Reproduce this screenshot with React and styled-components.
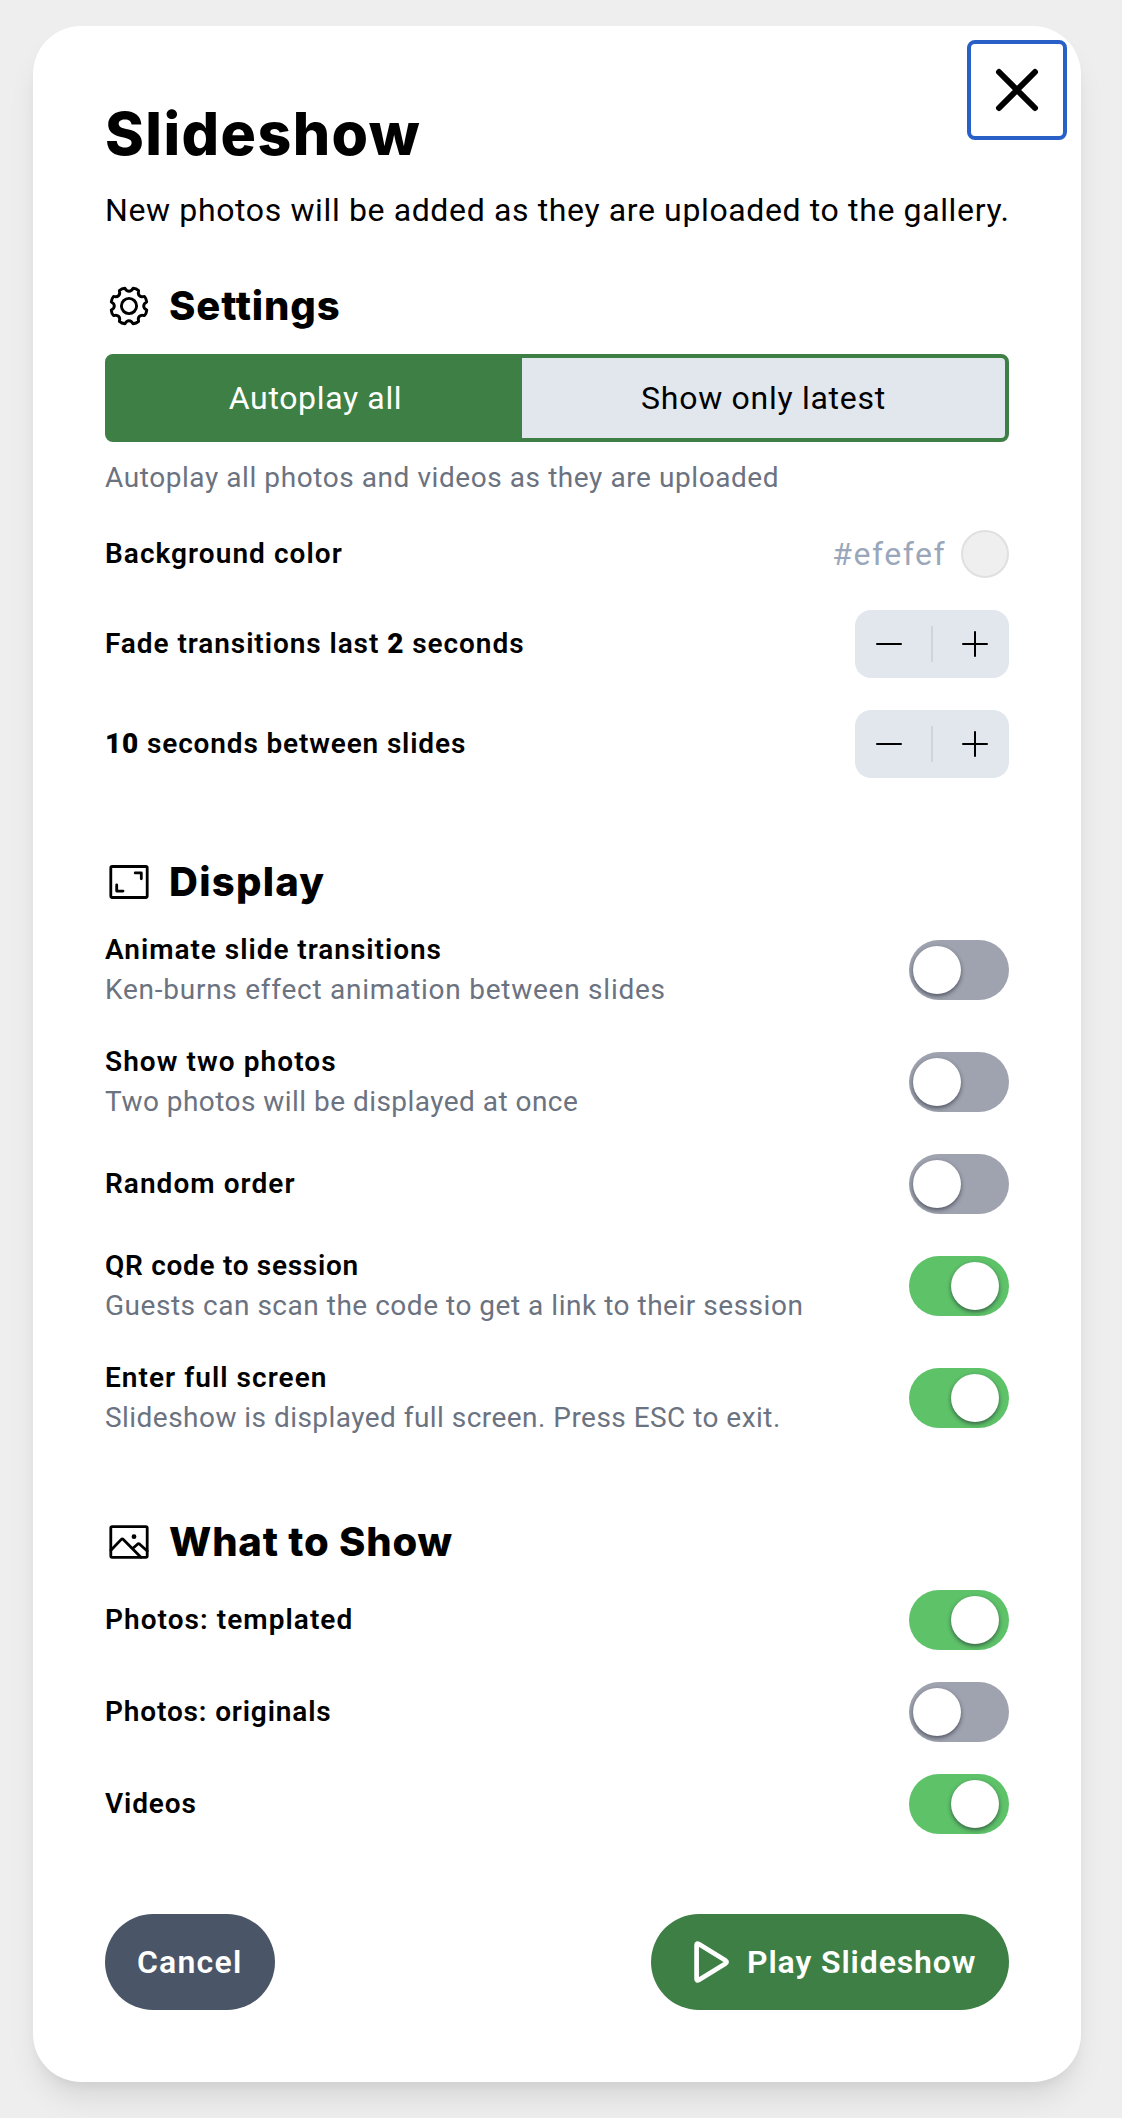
import React, { useState } from 'react';
import styled, { createGlobalStyle } from 'styled-components';

const GlobalStyle = createGlobalStyle`
  * {
    box-sizing: border-box;
  }
  body {
    margin: 0;
    background-color: #eeeeee;
    font-family: Roboto, 'Liberation Sans', sans-serif;
    color: #000;
  }
  button {
    font-family: inherit;
    color: inherit;
    border: none;
    background: none;
    padding: 0;
    margin: 0;
  }
`;
const Page = styled.div`
  padding: 26px 41px 36px 33px;
`;
const Card = styled.div`
  position: relative;
  height: 2056px;
  padding: 72px;
  border-radius: 48px;
  background-color: #fff;
  box-shadow: 0 20px 30px -6px rgba(0, 0, 0, 0.1), 0 8px 12px -4px rgba(0, 0, 0, 0.05);
`;
const CloseButton = styled.button`
  position: absolute;
  top: 14px;
  right: 14px;
  width: 100px;
  height: 100px;
  display: flex;
  align-items: center;
  justify-content: center;
  border: 4px solid #2860c8;
  border-radius: 8px;
`;
const Title = styled.h1`
  margin: 0;
  font-family: Inter, sans-serif;
  font-size: 59px;
  line-height: 72px;
  font-weight: 800;
  letter-spacing: ${(props) => props.$track || 0}px;
`;
const Intro = styled.p`
  margin: 16px 0 42px;
  font-size: 32px;
  line-height: 48px;
  white-space: nowrap;
  letter-spacing: 0.63px;
`;
const Section = styled.section`
  margin-bottom: ${(props) => (props.$last ? 80 : 74)}px;
`;
const SectionHead = styled.div`
  display: flex;
  align-items: center;
  gap: 16px;
  height: 60px;
  margin-bottom: 18px;
`;
const SectionTitle = styled.h2`
  margin: 0;
  font-family: Inter, sans-serif;
  font-size: 40px;
  line-height: 60px;
  font-weight: 800;
  letter-spacing: ${(props) => props.$track || 0}px;
`;
const Segmented = styled.div`
  display: flex;
  height: 88px;
  border: 4px solid #3d7f44;
  border-radius: 8px;
  background-color: #e2e7ee;
`;
const Segment = styled.button`
  flex: ${(props) => props.$grow} 1 0;
  font-size: 32px;
  line-height: 48px;
  background-color: ${(props) => (props.$active ? '#3d7f44' : 'transparent')};
  color: ${(props) => (props.$active ? '#fff' : '#000')};
  letter-spacing: ${(props) => props.$track || 0}px;
`;
const Rows = styled.div`
  display: flex;
  flex-direction: column;
  gap: 32px;
`;
const Row = styled.div`
  display: flex;
  align-items: center;
  justify-content: space-between;
`;
const Label = styled.div`
  padding-bottom: 1px;
  font-size: 28px;
  line-height: 39px;
  font-weight: 600;
  white-space: nowrap;
  letter-spacing: ${(props) => props.$track || 0}px;
`;
const Hint = styled.div`
  padding-bottom: 1px;
  font-size: 28px;
  line-height: 39px;
  color: #6b7280;
  white-space: nowrap;
  letter-spacing: ${(props) => props.$track || 0}px;
`;
const ModeHint = styled(Hint)`
  margin: 16px 0 32px;
`;
const ColorPicker = styled.div`
  display: flex;
  align-items: center;
  gap: 15px;
`;
const ColorValue = styled.span`
  font-size: 32px;
  line-height: 48px;
  color: #9aa7bb;
  letter-spacing: 1.5px;
`;
const Swatch = styled.span`
  width: 48px;
  height: 48px;
  border: 2px solid #e0e0e0;
  border-radius: 50%;
  background-color: #efefef;
`;
const StepperBox = styled.div`
  display: flex;
  align-items: center;
  width: 154px;
  height: 68px;
  border-radius: 16px;
  background-color: #e2e7ee;
`;
const StepButton = styled.button`
  flex: 1;
  display: flex;
  justify-content: ${(props) => props.$side};
  padding: 0 18px;
`;
const Divider = styled.span`
  width: 2px;
  height: 36px;
  background-color: #cbd5e0;
`;
const Track = styled.button`
  display: flex;
  align-items: center;
  justify-content: ${(props) => (props.$on ? 'flex-end' : 'flex-start')};
  width: 100px;
  height: 60px;
  padding: 0 10px 0 4px;
  border-radius: 30px;
  background-color: ${(props) => (props.$on ? '#5ec269' : '#9fa3af')};
`;
const Knob = styled.span`
  width: 48px;
  height: 48px;
  border-radius: 50%;
  background-color: #fff;
  box-shadow: 0 2px 4px rgba(26, 32, 44, 0.6);
`;
const Footer = styled.div`
  display: flex;
  justify-content: space-between;
`;
const PillButton = styled.button`
  display: flex;
  align-items: center;
  gap: 16px;
  width: ${(props) => props.$width}px;
  height: 96px;
  padding: 0 32px;
  border-radius: 48px;
  background-color: ${(props) => props.$bg};
  color: #fff;
  font-size: 32px;
  line-height: 48px;
  font-weight: 600;
  white-space: nowrap;
  letter-spacing: ${(props) => props.$track || 0}px;
`;
const Icon = styled.svg`
  display: block;
  flex: none;
  fill: none;
  stroke: currentColor;
  stroke-linecap: round;
  stroke-linejoin: round;
`;

// eight flat teeth with rounded notches between them
const gearPath = () => {
  const at = (deg, r) => {
    const a = (deg * Math.PI) / 180;
    return `${(24 + r * Math.sin(a)).toFixed(2)} ${(24 - r * Math.cos(a)).toFixed(2)}`;
  };
  let d = `M${at(-13, 18.2)}`;
  for (let a = 0; a < 360; a += 45) {
    d += `C${at(a - 8, 13.8)} ${at(a + 8, 13.8)} ${at(a + 13, 18.2)}`;
    d += `Q${at(a + 22.5, 19)} ${at(a + 32, 18.2)}`;
  }
  return `${d}Z`;
};

const GearIcon = () => (
  <Icon width="48" height="48" viewBox="0 0 48 48" strokeWidth="2.9">
    <path d={gearPath()} />
    <circle cx="24" cy="24" r="7.6" />
  </Icon>
);

const ScreenIcon = () => (
  <Icon width="48" height="48" viewBox="0 0 48 48" strokeWidth="2.8">
    <rect x="5.8" y="8.5" width="36.4" height="31" rx="1.4" />
    <path d="M30.2 14.9H36.3V20.8M11.7 26.9V33.1H18" />
  </Icon>
);

const PictureIcon = () => (
  <Icon width="48" height="48" viewBox="0 0 48 48" strokeWidth="2.8">
    <rect x="5.8" y="8.6" width="36.4" height="30.8" rx="1.4" />
    <path d="M5.9 32.3L16.3 21.4Q17.3 20.4 18.3 21.4L35.9 39.2M28.5 29.8L32.5 26.2Q33.6 25.3 34.7 26.2L42.2 33" />
    <circle cx="29" cy="18.7" r="2.4" fill="currentColor" stroke="none" />
  </Icon>
);

const CloseIcon = () => (
  <Icon width="48" height="48" viewBox="0 0 48 48" strokeWidth="6">
    <path d="M6 6L42 42M42 6L6 42" />
  </Icon>
);

const PlayIcon = () => (
  <Icon width="48" height="48" viewBox="0 0 48 48" strokeWidth="4.7">
    <path d="M13.6 7V41Q13.6 43.2 15.8 42L42.6 25.4Q44.6 24 42.6 22.6L15.8 6Q13.6 4.8 13.6 7Z" />
  </Icon>
);

const Stepper = () => (
  <StepperBox>
    <StepButton $side="flex-start">
      <Icon width="32" height="32" viewBox="0 0 32 32" strokeWidth="2">
        <path d="M4 16H28" />
      </Icon>
    </StepButton>
    <Divider />
    <StepButton $side="flex-end">
      <Icon width="32" height="32" viewBox="0 0 32 32" strokeWidth="2">
        <path d="M4 16H28M16 4V28" />
      </Icon>
    </StepButton>
  </StepperBox>
);

const ToggleRow = ({ label, track, hint, hintTrack, initial }) => {
  const [on, setOn] = useState(initial);
  return (
    <Row>
      <div>
        <Label $track={track}>{label}</Label>
        {hint ? <Hint $track={hintTrack}>{hint}</Hint> : null}
      </div>
      <Track $on={on} onClick={() => setOn(!on)}>
        <Knob />
      </Track>
    </Row>
  );
};

const displayOptions = [
  { label: 'Animate slide transitions', track: 0.97, hint: 'Ken-burns effect animation between slides', hintTrack: 0.75, initial: false },
  { label: 'Show two photos', track: 1.07, hint: 'Two photos will be displayed at once', hintTrack: 0.46, initial: false },
  { label: 'Random order', track: 1.05, initial: false },
  { label: 'QR code to session', track: 0.7, hint: 'Guests can scan the code to get a link to their session', hintTrack: 0.52, initial: true },
  { label: 'Enter full screen', track: 1.05, hint: 'Slideshow is displayed full screen. Press ESC to exit.', hintTrack: 0.46, initial: true }
];

const contentOptions = [
  { label: 'Photos: templated', track: 1.05, initial: true },
  { label: 'Photos: originals', track: 0.85, initial: false },
  { label: 'Videos', track: 0.85, initial: true }
];

export default function App () {
  const [mode, setMode] = useState('all');
  return (
    <Page>
      <GlobalStyle />
      <Card>
        <CloseButton>
          <CloseIcon />
        </CloseButton>
        <Title $track={1.4}>Slideshow</Title>
        <Intro>New photos will be added as they are uploaded to the gallery.</Intro>

        <Section>
          <SectionHead>
            <GearIcon />
            <SectionTitle $track={0.85}>Settings</SectionTitle>
          </SectionHead>
          <Segmented>
            <Segment $grow={413} $track={0.65} $active={mode === 'all'} onClick={() => setMode('all')}>Autoplay all</Segment>
            <Segment $grow={483} $track={0.72} $active={mode === 'latest'} onClick={() => setMode('latest')}>Show only latest</Segment>
          </Segmented>
          <ModeHint $track={0.57}>Autoplay all photos and videos as they are uploaded</ModeHint>
          <Rows>
            <Row>
              <Label $track={1.05}>Background color</Label>
              <ColorPicker>
                <ColorValue>#efefef</ColorValue>
                <Swatch />
              </ColorPicker>
            </Row>
            <Row>
              <Label $track={0.93}>Fade transitions last <b>2</b> seconds</Label>
              <Stepper />
            </Row>
            <Row>
              <Label $track={0.85}><b>10</b> seconds between slides</Label>
              <Stepper />
            </Row>
          </Rows>
        </Section>

        <Section>
          <SectionHead>
            <ScreenIcon />
            <SectionTitle $track={1.25}>Display</SectionTitle>
          </SectionHead>
          <Rows>
            {displayOptions.map((option) => <ToggleRow key={option.label} {...option} />)}
          </Rows>
        </Section>

        <Section $last>
          <SectionHead>
            <PictureIcon />
            <SectionTitle $track={0.8}>What to Show</SectionTitle>
          </SectionHead>
          <Rows>
            {contentOptions.map((option) => <ToggleRow key={option.label} {...option} />)}
          </Rows>
        </Section>

        <Footer>
          <PillButton $width={170} $track={1.2} $bg="#4a5567">Cancel</PillButton>
          <PillButton $width={358} $track={0.87} $bg="#3d7f44">
            <PlayIcon />
            <span>Play Slideshow</span>
          </PillButton>
        </Footer>
      </Card>
    </Page>
  );
}
